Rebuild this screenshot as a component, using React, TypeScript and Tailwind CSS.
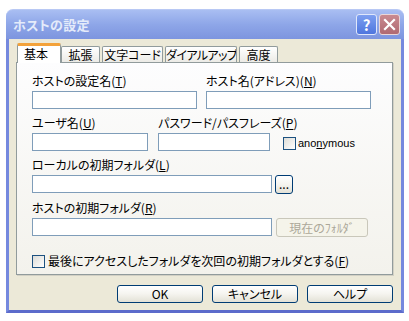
import React from "react";

const FONT = "font-['Noto_Sans_CJK_JP',sans-serif] [font-feature-settings:'palt']";

function Key({ k }: { k: string }) {
  return (
    <>
      (<span className="underline underline-offset-[1px]">{k}</span>)
    </>
  );
}

function Label({ text, k }: { text: string; k: string }) {
  return (
    <div className="h-[14px] leading-[14px] text-[12px] whitespace-nowrap text-black">
      {text}
      <Key k={k} />
    </div>
  );
}

function Field({ className }: { className: string }) {
  return <div className={`h-[18px] border border-[#7f9db9] bg-white ${className}`} />;
}

function Check() {
  return (
    <div className="w-[13px] h-[13px] shrink-0 border border-[#1c5180] bg-gradient-to-br from-[#dcdcd7] to-white" />
  );
}

function XpButton({ children, className = "", disabled = false }: { children: React.ReactNode; className?: string; disabled?: boolean }) {
  return (
    <div
      className={`flex items-center justify-center rounded-[3px] border text-[12px] leading-none ${
        disabled
          ? "border-[#c9c7ba] bg-[#f5f4ea] text-[#aca899]"
          : "border-[#003c74] bg-gradient-to-b from-white via-[#f5f4ef] to-[#e3e1d6] text-black"
      } ${className}`}
    >
      {children}
    </div>
  );
}

const tabs = [
  { label: "拡張", w: "w-[39px]", t: "" },
  { label: "文字コード", w: "w-[61px]", t: "" },
  { label: "ダイアルアップ", w: "w-[72px]", t: "tracking-[-0.6px]" },
  { label: "高度", w: "w-[39px]", t: "" },
];

export default function App() {
  return (
    <div className={`w-[409px] h-[321px] bg-white pl-[6px] pt-[9px] ${FONT}`}>
      <div className="w-[398px] h-[304px] flex flex-col">
        {/* title bar */}
        <div className="h-[30px] shrink-0 flex items-center rounded-t-[7px] bg-gradient-to-b from-[#a9bef2] via-[#8ea6e8] to-[#7d95df] pl-[7px] pr-[4px] border-t border-[#b8c8f4]">
          <span className="text-[13px] font-bold text-[#e4ebfa] leading-none tracking-[0.3px]">ホストの設定</span>
          <div className="ml-auto flex gap-[2px]">
            <div className="w-[21px] h-[21px] rounded-[3px] border border-[#dfe7fb] bg-gradient-to-b from-[#7d9ff0] to-[#4f76de] flex items-center justify-center text-white text-[15px] font-bold leading-none">
              ?
            </div>
            <div className="w-[21px] h-[21px] rounded-[3px] border border-[#e9d6d8] bg-gradient-to-b from-[#c98a90] to-[#b06a72] flex items-center justify-center">
              <svg width="13" height="13" viewBox="0 0 13 13">
                <path d="M2 2 L11 11 M11 2 L2 11" stroke="white" strokeWidth="2.2" strokeLinecap="square" />
              </svg>
            </div>
          </div>
        </div>

        {/* body */}
        <div className="flex-1 flex flex-col bg-[#ece9d8] border-l-[3px] border-r-[3px] border-b-[3px] border-l-[#7589de] border-r-[#7589de] border-b-[#5c6bcb] pl-[7px] pr-[8px] pt-[4px]">
          {/* tabs */}
          <div className="flex items-end h-[19px] pl-[1px] relative z-10">
            <div className="w-[44px] h-[20px] -mb-px bg-white border-x border-[#919b9c] border-t-[3px] border-t-[#f3a23a] rounded-t-[2px] text-[12px] leading-[15px] pl-[6px] text-black">
              基本
            </div>
            {tabs.map((t, i) => (
              <div
                key={t.label}
                className={`${t.w} ${i > 0 ? "ml-[2px]" : ""} ${t.t} h-[16px] shrink-0 overflow-hidden border border-b-0 border-[#919b9c] rounded-t-[2px] bg-gradient-to-b from-white to-[#ecebe6] text-[12px] leading-[15px] text-center text-black whitespace-nowrap`}
              >
                {t.label}
              </div>
            ))}
          </div>

          {/* panel */}
          <div className="h-[213px] border border-[#919b9c] bg-gradient-to-b from-[#fdfdfe] to-[#f3f2ec] shadow-[1px_1px_0_#d2d0c4] pl-[15px] pt-[11px]">
            <div className="flex">
              <div className="flex flex-col w-[165px]">
                <Label text="ホストの設定名" k="T" />
                <Field className="mt-[3px] w-[165px]" />
              </div>
              <div className="flex flex-col w-[165px] ml-[9px]">
                <Label text="ホスト名(アドレス)" k="N" />
                <Field className="mt-[3px] w-[165px]" />
              </div>
            </div>

            <div className="flex mt-[7px]">
              <div className="flex flex-col w-[116px]">
                <Label text="ユーザ名" k="U" />
                <Field className="mt-[3px] w-[116px]" />
              </div>
              <div className="flex flex-col w-[112px] ml-[10px]">
                <Label text="パスワード/パスフレーズ" k="P" />
                <Field className="mt-[3px] w-[112px]" />
              </div>
              <div className="flex items-center ml-[13px] mt-[21px] h-[13px] self-start gap-[2px]">
                <Check />
                <span className="font-['Liberation_Sans',sans-serif] text-[11px] leading-none text-black">
                  ano<span className="underline underline-offset-[1px]">n</span>ymous
                </span>
              </div>
            </div>

            <div className="flex flex-col mt-[7px]">
              <Label text="ローカルの初期フォルダ" k="L" />
              <div className="flex mt-[3px]">
                <Field className="w-[240px]" />
                <XpButton className="w-[18px] h-[19px] ml-[3px] !items-end pb-[3px] text-[10px]">...</XpButton>
              </div>
            </div>

            <div className="flex flex-col mt-[7px]">
              <Label text="ホストの初期フォルダ" k="R" />
              <div className="flex mt-[3px]">
                <Field className="w-[240px]" />
                <XpButton disabled className="w-[92px] h-[19px] ml-[4px]">
                  現在のﾌｫﾙﾀﾞ
                </XpButton>
              </div>
            </div>

            <div className="flex items-center mt-[17px] gap-[3px]">
              <Check />
              <span className="text-[12px] leading-[14px] text-black whitespace-nowrap">
                最後にアクセスしたフォルダを次回の初期フォルダとする
                <Key k="F" />
              </span>
            </div>
          </div>

          {/* buttons */}
          <div className="flex justify-end gap-[9px] mt-[10px]">
            <XpButton className="w-[86px] h-[18px]">OK</XpButton>
            <XpButton className="w-[86px] h-[18px]">キャンセル</XpButton>
            <XpButton className="w-[86px] h-[18px]">ヘルプ</XpButton>
          </div>
        </div>
      </div>
    </div>
  );
}
